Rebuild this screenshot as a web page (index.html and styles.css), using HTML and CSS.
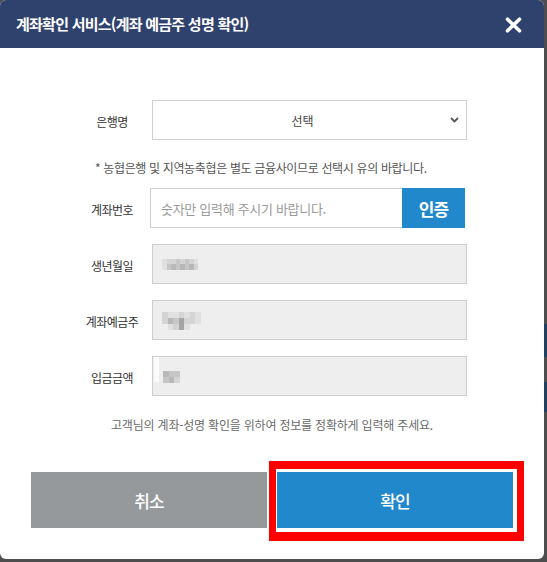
FILE: index.html
```html
<!DOCTYPE html>
<html lang="ko">
<head>
<meta charset="utf-8">
<title>계좌확인 서비스</title>
<link rel="stylesheet" href="styles.css">
</head>
<body>
<div class="modal">
  <div class="modal-header">
    <h1 class="title">계좌확인 서비스(계좌 예금주 성명 확인)</h1>
    <button class="close" type="button" aria-label="닫기">
      <svg width="17" height="16" viewBox="0 0 17 16"><path d="M2.5 2.2 L14.5 13.8 M14.5 2.2 L2.5 13.8" stroke="#fff" stroke-width="3.6" stroke-linecap="round" fill="none"/></svg>
    </button>
  </div>
  <div class="modal-body">
    <div class="form">
      <div class="row">
        <label class="lbl">은행명</label>
        <div class="select-wrap">
          <select class="select"><option>선택</option></select>
          <svg class="chev" width="9" height="6" viewBox="0 0 9 6"><path d="M1 1 L4.5 4.5 L8 1" stroke="#555" stroke-width="1.8" fill="none"/></svg>
        </div>
      </div>
      <p class="note">* 농협은행 및 지역농축협은 별도 금융사이므로 선택시 유의 바랍니다.</p>
      <div class="row">
        <label class="lbl">계좌번호</label>
        <div class="acct">
          <input class="acct-input" type="text" placeholder="숫자만 입력해 주시기 바랍니다.">
          <button class="auth" type="button">인증</button>
        </div>
      </div>
      <div class="row gap">
        <label class="lbl">생년월일</label>
        <div class="field">
          <div class="mosaic mosaic-birth">
            <i class="c1"></i><i class="c2"></i><i class="c2"></i><i class="c3"></i><i class="c2"></i><i class="c3"></i><i class="c2"></i><i class="c1"></i>
            <i class="c1"></i><i class="c3"></i><i class="c4"></i><i class="c3"></i><i class="c4"></i><i class="c3"></i><i class="c4"></i><i class="c2"></i>
          </div>
        </div>
      </div>
      <div class="row gap">
        <label class="lbl">계좌예금주</label>
        <div class="field">
          <div class="mosaic mosaic-name">
            <i class="c2"></i><i class="c1"></i><i class="c1"></i><i class="c2"></i><i class="c1"></i><i class="c2"></i><i class="c1"></i>
            <i class="c2"></i><i class="c4"></i><i class="c3"></i><i class="c5"></i><i class="c2"></i><i class="c2"></i><i class="c1"></i>
            <i class="c0"></i><i class="c1"></i><i class="c2"></i><i class="c5"></i><i class="c1"></i><i class="c0"></i><i class="c0"></i>
          </div>
        </div>
      </div>
      <div class="row gap">
        <label class="lbl">입금금액</label>
        <div class="field field-amount">
          <span class="white-strip"></span>
          <div class="mosaic mosaic-amount">
            <i class="c4"></i><i class="c3"></i><i class="c3"></i>
            <i class="c3"></i><i class="c4"></i><i class="c2"></i>
          </div>
        </div>
      </div>
    </div>
    <p class="guide">고객님의 계좌-성명 확인을 위하여 정보를 정확하게 입력해 주세요.</p>
    <div class="actions">
      <button class="btn cancel" type="button">취소</button>
      <button class="btn ok" type="button">확인<span class="highlight"></span></button>
    </div>
  </div>
</div>
</body>
</html>
```
FILE: styles.css
```css
html {
  background: linear-gradient(to bottom, #4d4d4d 0 324px, #22405f 324px 357px, #4d4d4d 357px 382px, #22405f 382px 412px, #4d4d4d 412px);
}
body {
  margin: 0;
  width: 547px;
  height: 562px;
  overflow: hidden;
  font-family: "Noto Sans CJK KR", "Noto Sans", sans-serif;
}
.modal {
  width: 544px;
  height: 559px;
  background: #fff;
  border-radius: 6px;
  overflow: hidden;
  display: flex;
  flex-direction: column;
}
.modal-header {
  height: 48px;
  flex: none;
  background: #2f416d;
  display: flex;
  align-items: center;
  justify-content: space-between;
  padding: 0 22px 0 16px;
}
.title {
  margin: 0;
  color: #fff;
  font-size: 15px;
  font-weight: 700;
  letter-spacing: -0.75px;
  line-height: 20px;
}
.close {
  border: 0;
  background: none;
  padding: 0;
  width: 17px;
  height: 16px;
  display: block;
  margin-top: 1px;
}
.close svg { display: block; }
.modal-body {
  padding-top: 52px;
}
.form {
  padding-left: 80px;
}
.row {
  display: flex;
  align-items: center;
  height: 40px;
}
.row.gap {
  margin-top: 16px;
}
.lbl {
  width: 64px;
  margin-right: 8px;
  text-align: center;
  font-size: 12px;
  letter-spacing: -0.5px;
  color: #333;
  white-space: nowrap;
  padding-top: 3px;
}
.select-wrap {
  position: relative;
  width: 315px;
  height: 40px;
}
.select {
  appearance: none;
  -webkit-appearance: none;
  width: 100%;
  height: 40px;
  border: 1px solid #cfcfcf;
  background: #fff;
  border-radius: 0;
  font-family: inherit;
  font-size: 12px;
  color: #444;
  text-align: center;
  text-align-last: center;
  padding: 0 14px 0 0;
  margin: 0;
}
.chev {
  position: absolute;
  right: 8px;
  top: 17px;
}
.note {
  margin: 20px 0 12px 15px;
  font-size: 12px;
  line-height: 16px;
  letter-spacing: -0.35px;
  color: #555;
}
.acct {
  display: flex;
  width: 315px;
  height: 40px;
  margin-left: -2px;
}
.acct-input {
  flex: 1;
  min-width: 0;
  height: 40px;
  box-sizing: border-box;
  border: 1px solid #cfcfcf;
  border-right: 0;
  padding: 0 0 0 10px;
  margin: 0;
  font-family: inherit;
  font-size: 13px;
  letter-spacing: -0.3px;
  color: #333;
}
.acct-input::placeholder {
  color: #9a9a9a;
}
.auth {
  width: 63px;
  height: 40px;
  border: 0;
  margin: 0;
  padding: 0;
  background: #2188cc;
  color: #fff;
  font-family: inherit;
  font-size: 17px;
  font-weight: 700;
  letter-spacing: -1px;
}
.field {
  width: 315px;
  height: 40px;
  box-sizing: border-box;
  border: 1px solid #cfcfcf;
  background: #eeeeee;
  display: flex;
  align-items: center;
  padding-left: 9px;
}
.mosaic {
  display: grid;
}
.mosaic i {
  display: block;
}
.mosaic-birth {
  grid-template-columns: repeat(8, 4.5px);
  grid-auto-rows: 5.5px;
  margin-top: 0;
}
.mosaic-name {
  grid-template-columns: repeat(7, 5.5px);
  grid-auto-rows: 6px;
  margin-top: 1px;
}
.mosaic-amount {
  grid-template-columns: repeat(3, 5.5px);
  grid-auto-rows: 6px;
  margin-top: 2px;
  margin-left: 4px;
}
.field-amount {
  padding-left: 1px;
}
.white-strip {
  width: 5px;
  height: 25px;
  background: #fbfbfb;
  align-self: flex-start;
}
.c0 { background: #eeeeee; }
.c1 { background: #e0e0e0; }
.c2 { background: #d4d4d4; }
.c3 { background: #c6c6c6; }
.c4 { background: #b8b8b8; }
.c5 { background: #a5a5a5; }
.guide {
  margin: 21px 0 0;
  text-align: center;
  font-size: 12px;
  line-height: 16px;
  letter-spacing: -0.2px;
  color: #6a6a6a;
}
.actions {
  display: flex;
  gap: 10px;
  padding: 0 31px;
  margin-top: 39px;
}
.btn {
  flex: 1;
  height: 56px;
  border: 0;
  margin: 0;
  padding: 0;
  color: #fff;
  font-family: inherit;
  font-size: 17px;
  font-weight: 500;
  letter-spacing: -1px;
}
.cancel {
  background: #95999c;
}
.ok {
  background: #2188cc;
  position: relative;
}
.highlight {
  position: absolute;
  left: -8px;
  top: -11px;
  right: -11px;
  bottom: -13px;
  border-style: solid;
  border-color: #ff0000;
  border-width: 8px 7px 9px 7px;
  pointer-events: none;
}
```
